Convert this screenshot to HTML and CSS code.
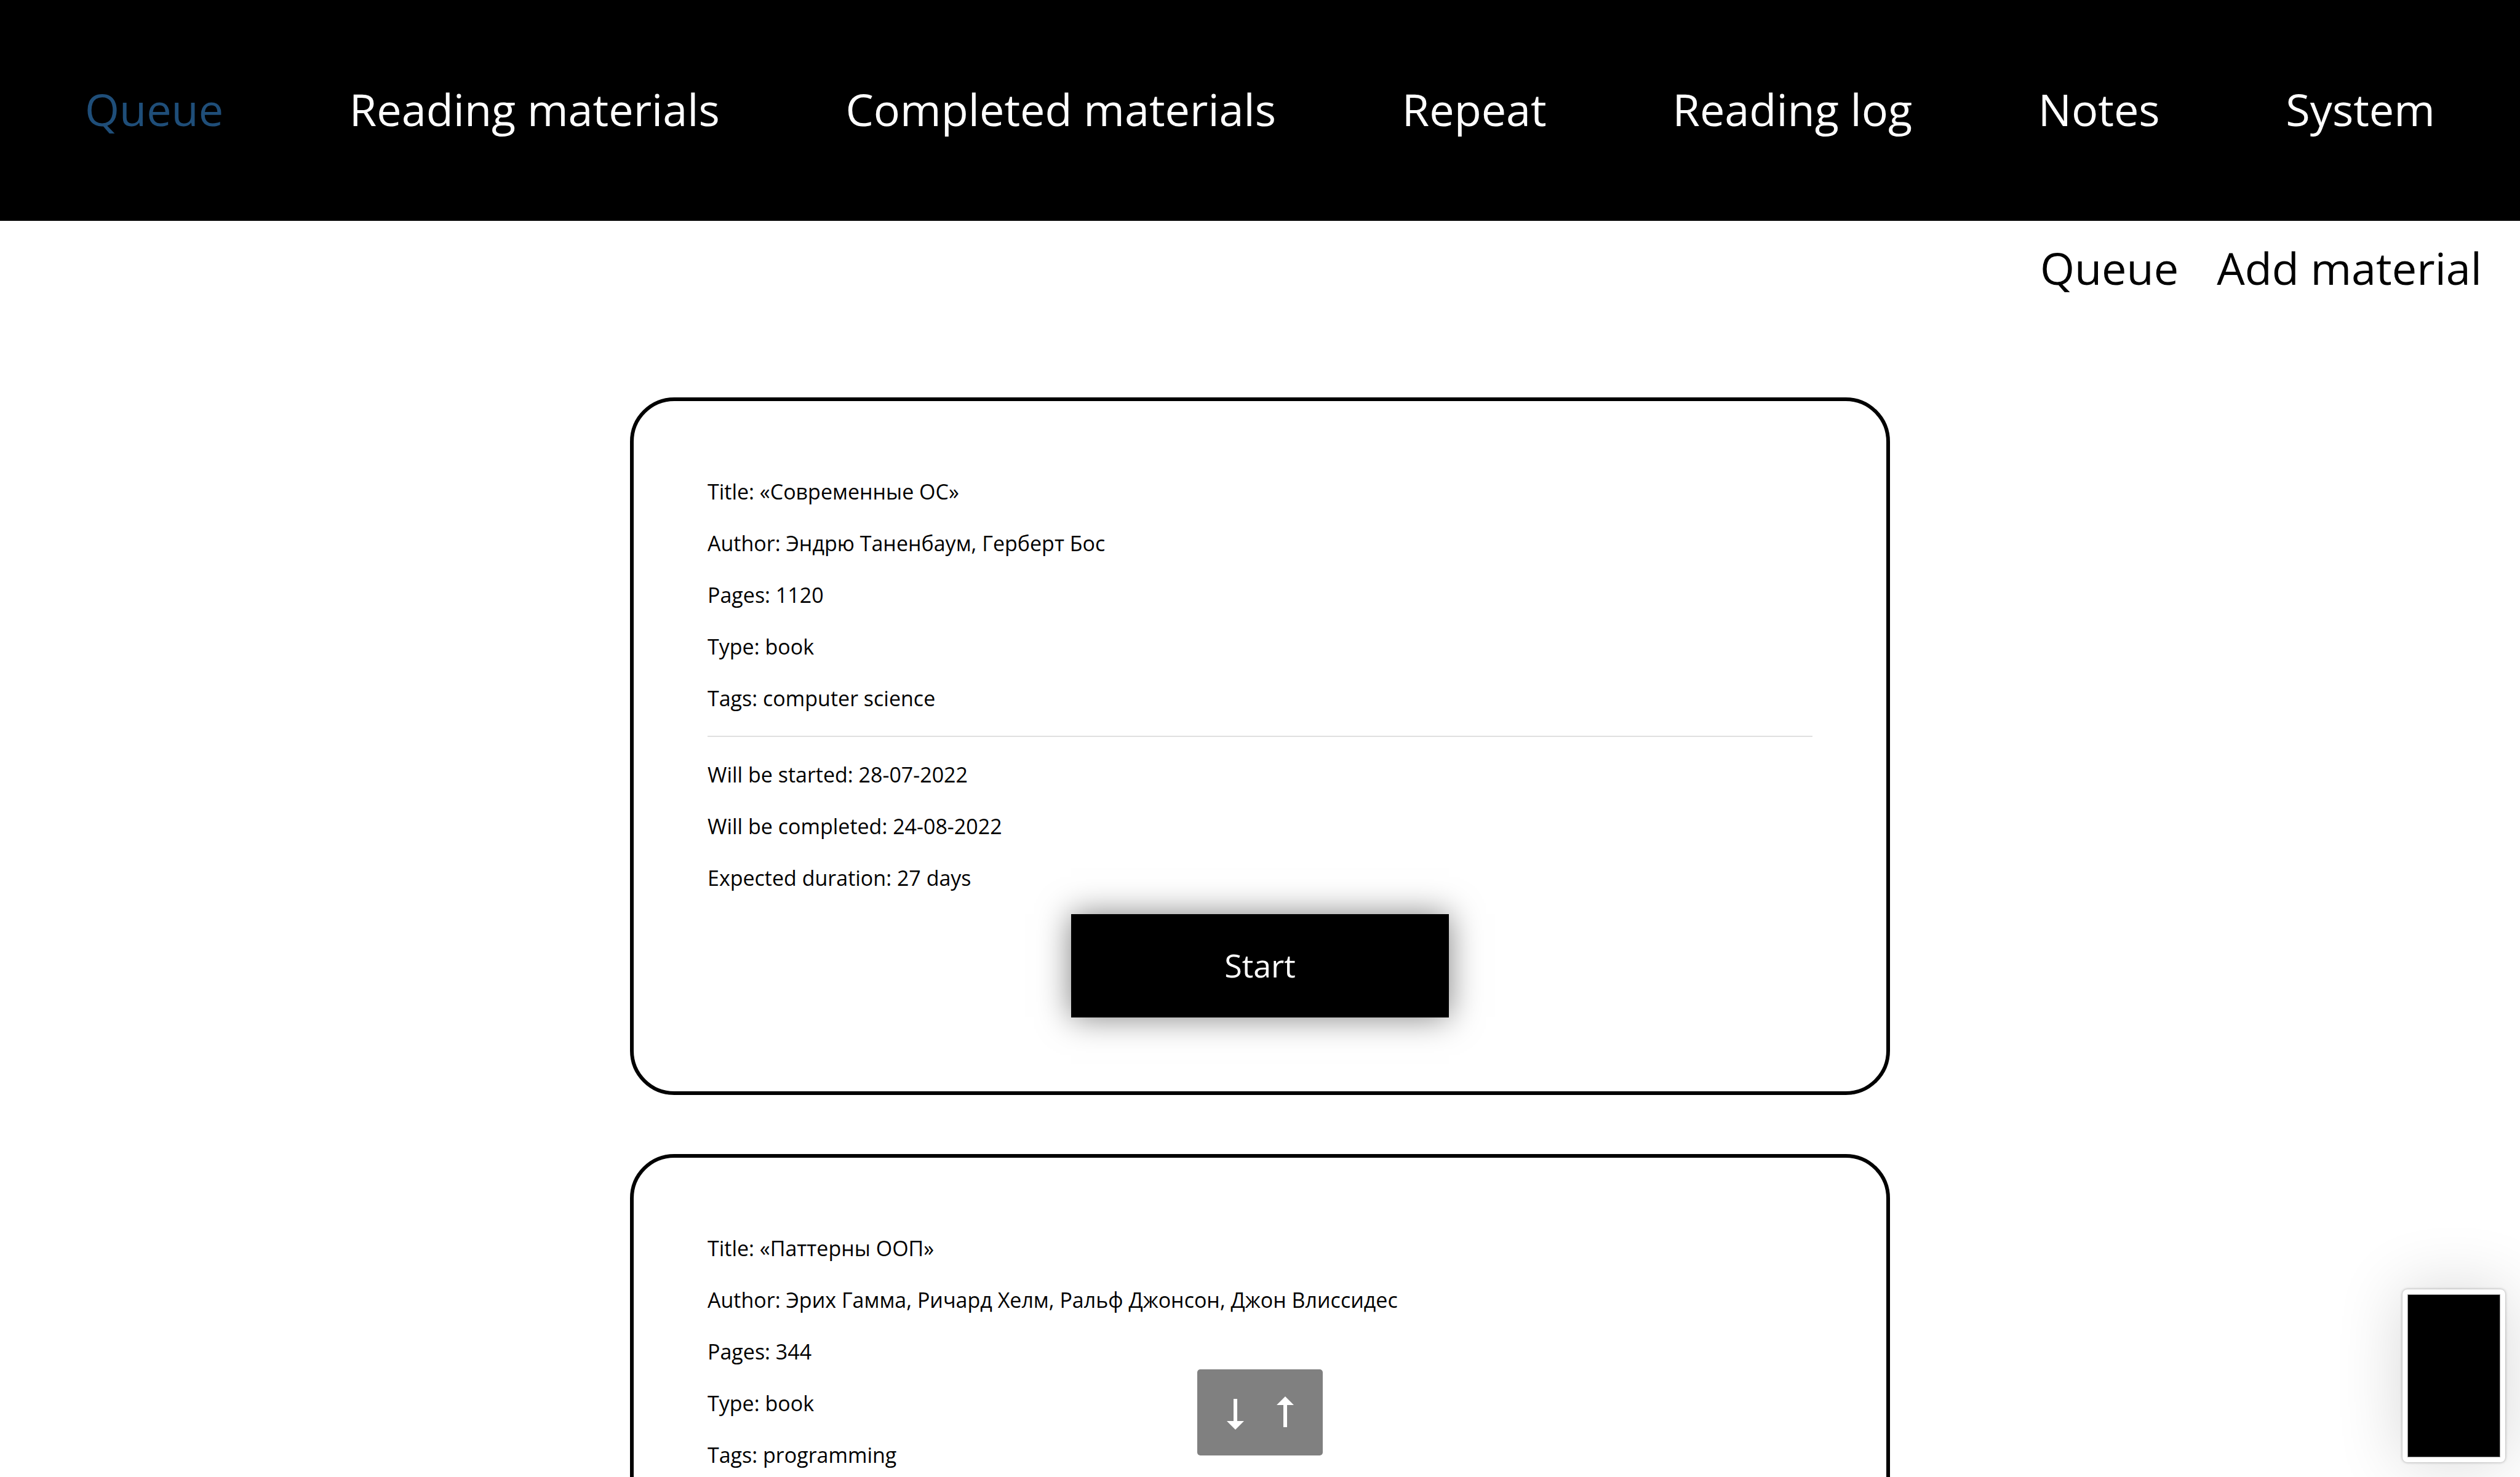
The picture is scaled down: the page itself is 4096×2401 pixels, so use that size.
FILE: index.html
```html
<!DOCTYPE html>
<html lang="en">
<head>
<meta charset="utf-8">
<title>Queue</title>
<link rel="stylesheet" href="styles.css">
</head>
<body>
<header class="header">
  <nav class="nav">
    <a class="nav-link active" href="#queue">Queue</a>
    <a class="nav-link" href="#reading">Reading materials</a>
    <a class="nav-link" href="#completed">Completed materials</a>
    <a class="nav-link" href="#repeat">Repeat</a>
    <a class="nav-link" href="#log">Reading log</a>
    <a class="nav-link" href="#notes">Notes</a>
    <a class="nav-link" href="#system">System</a>
  </nav>
</header>
<nav class="subnav">
  <a class="subnav-link" href="#queue">Queue</a>
  <a class="subnav-link" href="#add">Add material</a>
</nav>
<main class="materials">
  <article class="card">
    <p class="row">Title: «Современные ОС»</p>
    <p class="row">Author: Эндрю Таненбаум, Герберт Бос</p>
    <p class="row">Pages: 1120</p>
    <p class="row">Type: book</p>
    <p class="row">Tags: computer science</p>
    <hr class="divider">
    <p class="row">Will be started: 28-07-2022</p>
    <p class="row">Will be completed: 24-08-2022</p>
    <p class="row">Expected duration: 27 days</p>
    <button class="start" type="button">Start</button>
  </article>
  <article class="card">
    <p class="row">Title: «Паттерны ООП»</p>
    <p class="row">Author: Эрих Гамма, Ричард Хелм, Ральф Джонсон, Джон Влиссидес</p>
    <p class="row">Pages: 344</p>
    <p class="row">Type: book</p>
    <p class="row">Tags: programming</p>
  </article>
</main>
<div class="scroller">
  <a class="scroll-link" href="#bottom" aria-label="To bottom"><svg class="arrow" viewBox="0 0 28 50"><path d="M11 0h6v36h11L14 50 0 36h11z"/></svg></a>
  <a class="scroll-link up" href="#top" aria-label="To top"><svg class="arrow" viewBox="0 0 28 50"><path d="M14 0l14 14H17v36h-6V14H0z"/></svg></a>
</div>
<aside class="preview"><div class="preview-screen"></div></aside>
</body>
</html>
```
FILE: styles.css
```css
* {
  box-sizing: border-box;
}

body {
  position: relative;
  height: 100vh;
  margin: 0;
  overflow: hidden;
  background: #fff;
  color: #000;
  font-family: "Open Sans", "Noto Sans", sans-serif;
  font-size: 34px;
}

a {
  color: inherit;
  text-decoration: none;
}

.header {
  padding: 125px 138px 130px;
  background: #000;
  color: #fff;
}

.nav {
  display: flex;
  justify-content: space-between;
}

.nav-link,
.subnav-link {
  font-size: 72px;
  line-height: 104px;
  white-space: nowrap;
}

.active {
  color: #1f4e79;
}

.subnav {
  display: flex;
  justify-content: flex-end;
  gap: 62px;
  padding: 24px 62px 0;
}

.materials {
  display: flex;
  flex-direction: column;
  align-items: center;
  gap: 96px;
  padding-top: 159px;
}

.card {
  display: flex;
  flex-direction: column;
  gap: 34px;
  width: 50%;
  padding: 122px 120px 120px;
  border: 6px solid #000;
  border-radius: 72px;
}

.row {
  margin: 0;
  line-height: 50px;
}

.divider {
  width: 100%;
  height: 2px;
  margin: 2px 0;
  border: 0;
  background: #e0e0e0;
}

.start {
  align-self: center;
  min-width: 614px;
  padding: 47px 0 49px;
  border: 0;
  background: #000;
  box-shadow: 0 0 50px rgba(0, 0, 0, 0.5);
  color: #fff;
  font-family: inherit;
  font-size: 52px;
  line-height: 72px;
}

.scroller {
  position: absolute;
  bottom: 35px;
  left: 50%;
  display: flex;
  justify-content: center;
  align-items: center;
  gap: 53px;
  width: 204px;
  height: 140px;
  margin-left: -102px;
  border-radius: 5px;
  background: #808080;
}

.scroll-link {
  padding-top: 6px;
}

.scroll-link.up {
  padding: 0 0 2px;
}

.arrow {
  display: block;
  width: 28px;
  height: 50px;
  fill: #fff;
}

.preview {
  position: absolute;
  right: 24px;
  bottom: 24px;
  width: 167px;
  height: 281px;
  padding: 8px;
  border-radius: 8px;
  background: #fff;
  box-shadow: 0 0 4px rgba(0, 0, 0, 0.35), 0 0 110px rgba(0, 0, 0, 0.16);
}

.preview-screen {
  height: 100%;
  border: 1px solid #999;
  background: #000;
}
```
